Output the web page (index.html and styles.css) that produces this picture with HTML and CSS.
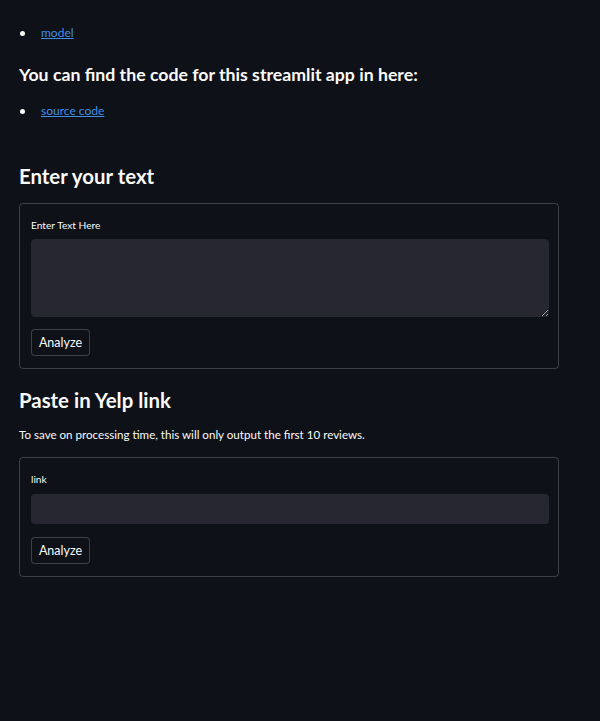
FILE: index.html
```html
<!DOCTYPE html>
<html>
<head>
<meta charset="utf-8">
<link rel="stylesheet" href="styles.css">
</head>
<body>
<main class="main">
  <ul class="list first">
    <li><a href="#">model</a></li>
  </ul>
  <h3 class="h3">You can find the code for this streamlit app in here:</h3>
  <ul class="list">
    <li><a href="#">source code</a></li>
  </ul>
  <h2 class="h2 h2-first">Enter your text</h2>
  <form class="card">
    <label class="label">Enter Text Here</label>
    <textarea class="textarea"></textarea>
    <div><button type="button" class="btn">Analyze</button></div>
  </form>
  <h2 class="h2 h2-tight">Paste in Yelp link</h2>
  <p class="para">To save on processing time, this will only output the first 10 reviews.</p>
  <form class="card">
    <label class="label">link</label>
    <input class="input" type="text">
    <div><button type="button" class="btn">Analyze</button></div>
  </form>
</main>
</body>
</html>
```
FILE: styles.css
```css
html, body {
  margin: 0;
  padding: 0;
  background: #0e1117;
  color: #fafafa;
  font-family: "Lato", "Noto Sans", sans-serif;
}
.main {
  width: 540px;
  padding: 18px 0 0 19px;
}
.list {
  margin: 0;
  padding: 0;
  list-style: none;
  font-size: 12px;
  line-height: 30px;
}
.list li {
  display: flex;
  align-items: center;
  padding-left: 1px;
}
.list li::before {
  content: "";
  width: 5px;
  height: 5px;
  border-radius: 50%;
  background: #fafafa;
  margin-right: 16px;
}
.list a {
  color: #3f8fe8;
  text-decoration: underline;
}
.h3 {
  margin: 12px 0 6px;
  font-size: 17.7px;
  font-weight: 700;
  line-height: 30px;
}
.h2 {
  margin: 13px 0 9px;
  font-size: 20.4px;
  font-weight: 700;
  line-height: 36px;
}
.h2-first { margin-top: 32px; }
.h2-tight { margin-bottom: 7px; }
.card {
  border: 1px solid rgba(250,250,250,0.2);
  border-radius: 4px;
  padding: 12px 9px 12px 11px;
  display: flex;
  flex-direction: column;
}
.label {
  font-size: 10.2px;
  line-height: 18px;
  margin-bottom: 5px;
}
.textarea, .input {
  box-sizing: border-box;
  background: #262730;
  border: none;
  border-radius: 4px;
  color: #fafafa;
  margin: 0;
  width: 100%;
}
.textarea {
  height: 78px;
  resize: vertical;
  display: block;
}
.input {
  height: 30px;
  display: block;
  margin: 1px 0 1px;
}
.btn {
  box-sizing: border-box;
  margin-top: 12px;
  background: #0e1117;
  color: #fafafa;
  border: 1px solid rgba(250,250,250,0.2);
  border-radius: 4px;
  font-family: inherit;
  font-size: 12.5px;
  height: 27px;
  width: 59px;
  padding: 0;
}
.para {
  margin: 0 0 12px;
  font-size: 11.6px;
  line-height: 20px;
}
```
